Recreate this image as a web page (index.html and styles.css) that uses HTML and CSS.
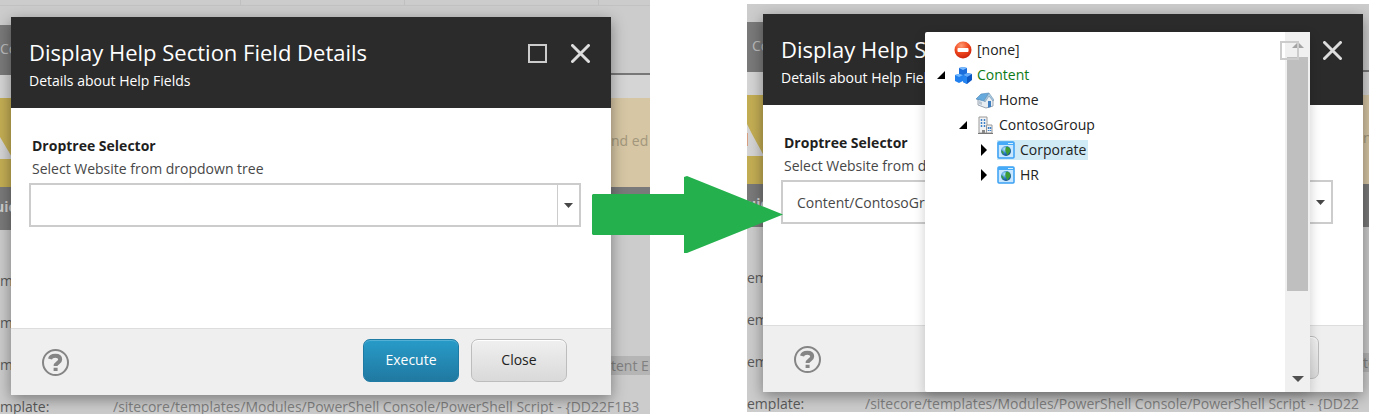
FILE: index.html
```html
<!DOCTYPE html>
<html lang="en">
<head>
<meta charset="utf-8">
<title>Droptree selector</title>
<link rel="stylesheet" href="styles.css">
</head>
<body>
<main class="page">
  <section class="scene">
    <div class="backdrop">
      <div class="grid-head"><i></i><i></i><i></i><i></i></div>
      <div class="band band-plain"></div>
      <div class="band band-tabs"><span class="tab">Co</span><span class="tab-line"></span></div>
      <div class="band band-gap"></div>
      <div class="band band-warning">
        <svg class="warning-mark" viewBox="0 0 40 89" aria-hidden="true"><path d="M-5 30 0 39 13 61H-5z" fill="#d5d5d5"/></svg>
        <span class="edge">nd ed</span>
      </div>
      <div class="band band-section"><b>uic</b></div>
      <div class="rows">
        <div class="row"><span class="row-label">m</span></div>
        <div class="row"><span class="row-label">m</span></div>
        <div class="row"><span class="row-label">m</span><span class="edge edge-marked">tent E</span></div>
        <div class="row"><span class="row-label">mplate:</span><span class="row-value">/sitecore/templates/Modules/PowerShell Console/PowerShell Script - {DD22F1B3</span></div>
      </div>
    </div>
    <div class="dialog">
      <header class="dialog-head">
        <div class="dialog-titles">
          <h1>Display Help Section Field Details</h1>
          <p>Details about Help Fields</p>
        </div>
        <button class="icon-button maximize" aria-label="Maximize"><svg viewBox="0 0 19 19"><path d="M1 1h17v17H1z"/></svg></button>
        <button class="icon-button" aria-label="Close dialog"><svg viewBox="0 0 19 19"><path class="cross" d="M1.5 1.5l16 16m0-16l-16 16"/></svg></button>
      </header>
      <div class="dialog-body">
        <label for="tree-a">Droptree Selector</label>
        <p>Select Website from dropdown tree</p>
        <div class="combo">
          <input id="tree-a" type="text">
          <button aria-label="Open tree"><svg viewBox="0 0 9 5"><path d="M0 0h9L4.500 5z"/></svg></button>
        </div>
      </div>
      <footer class="dialog-foot">
        <button class="icon-button help" aria-label="Help"><svg viewBox="0 0 27 27"><circle cx="13.500" cy="13.500" r="12.500"/><path d="M8 10C8.500 7.500 11 6.800 13.300 6.800c3 0 4.900 1.400 4.900 3.600 0 3.600-4.600 3.300-4.600 6.600M13.600 18.800v3.200"/></svg></button>
        <button class="button primary">Execute</button>
        <button class="button">Close</button>
      </footer>
    </div>
  </section>

  <div class="between">
    <svg class="arrow" viewBox="0 0 191 78" aria-hidden="true"><path d="M1 18h91V1l3-1 96 38.500L95 77h-3V59H1L0 58V19z"/></svg>
  </div>

  <section class="scene scene-open">
    <div class="backdrop">
      <div class="grid-head"></div>
      <div class="band band-plain"></div>
      <div class="band band-tabs"><span class="tab">Co</span><span class="tab-line"></span></div>
      <div class="band band-gap"></div>
      <div class="band band-warning">
        <svg class="warning-mark" viewBox="-5 0 40 89" aria-hidden="true"><path d="M-5 29 0 39 12 61H-5z" fill="#d5d5d5"/><path d="M-5 38v13h1V38z" fill="#d8a080"/></svg>
        <span class="edge">n</span>
      </div>
      <div class="band band-section"><b>uic</b></div>
      <div class="rows">
        <div class="row"><span class="row-label">em</span></div>
        <div class="row"><span class="row-label">em</span></div>
        <div class="row"><span class="row-label">em</span><span class="edge edge-marked">te</span></div>
        <div class="row"><span class="row-label">emplate:</span><span class="row-value">/sitecore/templates/Modules/PowerShell Console/PowerShell Script - {DD22</span></div>
      </div>
    </div>
    <div class="dialog">
      <header class="dialog-head">
        <div class="dialog-titles">
          <h1>Display Help Section Field Details</h1>
          <p>Details about Help Fields</p>
        </div>
        <button class="icon-button maximize" aria-label="Maximize"><svg viewBox="0 0 19 19"><path d="M1 1h17v17H1z"/></svg></button>
        <button class="icon-button" aria-label="Close dialog"><svg viewBox="0 0 19 19"><path class="cross" d="M1.5 1.5l16 16m0-16l-16 16"/></svg></button>
      </header>
      <div class="dialog-body">
        <label for="tree-b">Droptree Selector</label>
        <p>Select Website from dropdown tree</p>
        <div class="combo">
          <input id="tree-b" type="text" value="Content/ContosoGroup">
          <button aria-label="Open tree"><svg viewBox="0 0 9 5"><path d="M0 0h9L4.500 5z"/></svg></button>
        </div>
      </div>
      <footer class="dialog-foot">
        <button class="icon-button help" aria-label="Help"><svg viewBox="0 0 27 27"><circle cx="13.500" cy="13.500" r="12.500"/><path d="M8 10C8.500 7.500 11 6.800 13.300 6.800c3 0 4.900 1.400 4.900 3.600 0 3.600-4.600 3.300-4.600 6.600M13.600 18.800v3.200"/></svg></button>
        <button class="button" aria-label="Close"></button>
      </footer>
      <div class="popup">
        <ul class="tree" role="tree">
          <li role="treeitem" class="node">
            <span class="toggle"></span>
            <svg class="node-icon" viewBox="0 0 18 18"><defs><radialGradient id="red" cx=".4" cy=".25" r=".8"><stop offset="0" stop-color="#ff9a72"/><stop offset=".5" stop-color="#f04a20"/><stop offset="1" stop-color="#c81e08"/></radialGradient></defs><circle cx="9" cy="9" r="8.500" fill="url(#red)"/><rect x="3.500" y="7" width="11" height="4" rx="1" fill="#fff"/></svg>
            <span class="node-text">[none]</span>
          </li>
          <li role="treeitem" class="node">
            <span class="toggle"><svg viewBox="0 0 8 8"><path d="M8 0v8H0z"/></svg></span>
            <svg class="node-icon" viewBox="0 0 18 18"><path d="M5 2l4-1 4 1v6l-4 2-4-2z" fill="#1a6ddb"/><path d="M5 2l4-1 4 1-4 2z" fill="#7cbcff"/><path d="M1 9l4-1 4 1v6l-4 2-4-2z" fill="#2180ee"/><path d="M1 9l4-1 4 1-4 2z" fill="#72b8ff"/><path d="M9 9l4-2 5 1v6l-5 4-4-2z" fill="#0b58c4"/><path d="M9 9l4-2 5 1-5 3z" fill="#64aafa"/><path d="M9 9l4 2v7l-4-2z" fill="#2484f0"/></svg>
            <span class="node-text root">Content</span>
          </li>
          <li role="treeitem" class="node level-1">
            <span class="toggle"></span>
            <svg class="node-icon" viewBox="0 0 18 18"><path d="M2 8v6l8 3 7-2V9l-4-5z" fill="#e8edf2" stroke="#9aa6b2"/><path d="M0 8l5-5 8-1-5 8z" fill="#65a9dd" stroke="#4a83b5" stroke-width=".6"/><path d="M8 10l5-8 5 7-1 1-4-5-4 6z" fill="#a9cbe5" stroke="#7695ae" stroke-width=".6"/><path d="M12 10h3v6l-3 .7z" fill="#3f7fc0"/><path d="M3 10l3 1v3l-3-1z" fill="#b9c5d0"/></svg>
            <span class="node-text">Home</span>
          </li>
          <li role="treeitem" class="node level-1">
            <span class="toggle"><svg viewBox="0 0 8 8"><path d="M8 0v8H0z"/></svg></span>
            <svg class="node-icon" viewBox="0 0 18 18"><path d="M3 1h8v8h5v8H3z" fill="#f3f3f3" stroke="#999"/><path d="M10.500 9v8" stroke="#999"/><path d="M5.500 3v9M8.500 3v9M12.500 11v4M14.500 11v4" stroke="#3f82c8" stroke-width="1.500" stroke-dasharray="2 1" fill="none"/><path d="M6 14h3v3H6z" fill="#888"/><path d="M2 17.500h15" stroke="#777"/></svg>
            <span class="node-text">ContosoGroup</span>
          </li>
          <li role="treeitem" class="node level-2">
            <span class="toggle"><svg class="closed" viewBox="0 0 6 12"><path d="M0 0l6 6-6 6z"/></svg></span>
            <span class="selected">
              <svg class="node-icon" viewBox="0 0 18 18"><defs><radialGradient id="globe" cx=".35" cy=".3" r=".8"><stop offset="0" stop-color="#b8e8ff"/><stop offset=".5" stop-color="#2a80c8"/><stop offset="1" stop-color="#104070"/></radialGradient></defs><rect x="1" y="1" width="16" height="16" rx="1" fill="#c9e7ff" stroke="#3aa0f4" stroke-width="1.500"/><path d="M1 1h16v3H1z" fill="#45aaf8"/><path d="M11 2.500h5" stroke="#d6efff"/><circle cx="9" cy="10" r="5" fill="url(#globe)"/><path d="M9 6c3-1 5 2 4 5-2 1-1 3-3 3 0-3-3-3-1-8zM4.500 9l2 2v2.500c-1.500-1-2.500-3-2-4.500z" fill="#3e9c35"/></svg>
              <span class="node-text">Corporate</span>
            </span>
          </li>
          <li role="treeitem" class="node level-2">
            <span class="toggle"><svg class="closed" viewBox="0 0 6 12"><path d="M0 0l6 6-6 6z"/></svg></span>
            <svg class="node-icon" viewBox="0 0 18 18"><rect x="1" y="1" width="16" height="16" rx="1" fill="#c9e7ff" stroke="#3aa0f4" stroke-width="1.500"/><path d="M1 1h16v3H1z" fill="#45aaf8"/><path d="M11 2.500h5" stroke="#d6efff"/><circle cx="9" cy="10" r="5" fill="url(#globe)"/><path d="M9 6c3-1 5 2 4 5-2 1-1 3-3 3 0-3-3-3-1-8zM4.500 9l2 2v2.500c-1.500-1-2.500-3-2-4.500z" fill="#3e9c35"/></svg>
            <span class="node-text">HR</span>
          </li>
        </ul>
        <div class="scrollbar">
          <svg class="scroll-up" viewBox="0 0 12 6"><path d="M6 0l6 6H0z"/></svg>
          <div class="scroll-track"><div class="scroll-thumb"></div></div>
          <svg class="scroll-down" viewBox="0 0 12 6"><path d="M0 0h12L6 6z"/></svg>
        </div>
      </div>
    </div>
  </section>
</main>
</body>
</html>
```
FILE: styles.css
```css
* { box-sizing: border-box; }

body {
  margin: 0;
  background: #fff;
  font: 14px/20px "Open Sans", sans-serif;
  color: #474747;
  overflow: hidden;
}

h1, p, ul { margin: 0; padding: 0; }

button, input { font: inherit; color: inherit; }

svg { display: block; }

.page {
  display: grid;
  grid-template-columns: 650fr 97px 622fr;
  padding-right: 10px;
}

/* Dimmed application page with a dialog over it */
.scene {
  display: grid;
  grid-template-columns: minmax(0, 1fr);
  align-items: start;
  overflow: hidden;
  background: #ccc;
}

.scene > * { grid-area: 1 / 1; }

.scene-open { margin: 4px 0 2px; }

.scene-open .backdrop { margin-top: -7px; }

.backdrop {
  overflow: hidden;
  white-space: nowrap;
  color: #808080;
}

.grid-head {
  display: grid;
  grid-template-columns: 241fr 164fr 194fr 51fr;
  height: 6px;
  border-bottom: 1px solid #c2c2c2;
}

.grid-head i { border-right: 1px solid #c0c0c0; }
.grid-head i:last-child { border: 0; }

.band { display: flex; }
.band-plain { height: 19px; }
.band-tabs { height: 50px; }

.tab {
  width: 60px;
  background: #7a7a7a;
  color: #bdbdbd;
  line-height: 48px;
}

.tab-line { flex: 1; border-bottom: 2px solid #777; }

.band-gap { height: 23px; background: #d5d5d5; }

.band-warning {
  height: 89px;
  align-items: center;
  background: linear-gradient(to right, #c4ae54 40px, #d6c6a4 40px);
  color: #a2967c;
}

.warning-mark { width: 40px; height: 89px; }

.edge {
  width: 39px;
  margin-left: auto;
  overflow: hidden;
}

.band-warning .edge { padding-bottom: 4px; }

.scene-open .edge { width: 6px; }

.edge-marked { height: 19px; line-height: 19px; background: #b5b5b5; }

.band-section {
  height: 43px;
  background: #7a7a7a;
  color: #d0d0d0;
  line-height: 40px;
}

.band-section b { margin-left: -5px; }

.scene-open .tab { padding-left: 5px; }
.scene-open .band-section b { margin-left: 0; }

.rows { padding-top: 30px; }

.row {
  display: flex;
  align-items: center;
  height: 42px;
}

.row:last-child { height: 28px; line-height: 42px; align-items: flex-start; }

.row-label { width: 113px; color: #5a5a5a; }
.scene-open .row-label { width: 118px; }
.row-value { flex: 1; overflow: hidden; }

/* Dialog */
.dialog {
  position: relative;
  margin: 17px 39px 0 11px;
  background: #fff;
  box-shadow: 0 4px 14px rgba(0, 0, 0, .4);
}

.scene-open .dialog { margin: 10px 6px 0 16px; }

.dialog-head {
  display: flex;
  align-items: flex-start;
  gap: 24px;
  padding: 20px 21px 17px 18px;
  background: #2b2b2b;
  color: #fff;
}

.dialog-titles { flex: 1; min-width: 0; white-space: nowrap; }

.dialog-titles h1 {
  margin-bottom: 4px;
  font-size: 22px;
  font-weight: 400;
  line-height: 30px;
}

.icon-button {
  padding: 0;
  border: 0;
  background: none;
}

.dialog-head .icon-button { margin-top: 7px; z-index: 2; }

.dialog-head svg {
  width: 19px;
  height: 19px;
  fill: none;
  stroke: #ccc;
  stroke-width: 2;
}

.dialog-head .cross { stroke: #ddd; stroke-width: 3; stroke-linecap: round; }

.dialog-body { padding: 28px 30px 101px 18px; }

.dialog-body label {
  display: block;
  margin-left: 3px;
  font-weight: 700;
  color: #1f1f1f;
}

.dialog-body p { margin: 3px 0 4px 3px; }

.combo {
  display: flex;
  height: 44px;
  border: 2px solid #ccc;
}

.combo input {
  flex: 1;
  min-width: 0;
  padding: 2px 14px 0;
  border: 0;
  background: none;
  outline: 0;
}

.combo button {
  display: flex;
  align-items: center;
  justify-content: center;
  width: 22px;
  padding: 0;
  border: 0;
  border-left: 1px solid #ccc;
  background: #fff;
}

.combo svg { width: 9px; height: 5px; fill: #474747; }

.dialog-foot {
  display: flex;
  align-items: center;
  gap: 12px;
  padding: 10px 44px 13px 31px;
  border-top: 1px solid #ddd;
  background: #efefef;
}

.help { margin-right: auto; padding-top: 4px; }

.help svg {
  width: 27px;
  height: 27px;
  fill: none;
  stroke: #858585;
  stroke-width: 4;
}

.help circle { stroke-width: 2; }

.button {
  width: 96px;
  height: 43px;
  padding: 0 0 2px;
  border: 1px solid #bdbdbd;
  border-radius: 7px;
  background: linear-gradient(#f0f0f0, #d9d9d9);
  box-shadow: inset 0 1px #fff;
  color: #222;
}

.primary {
  border-color: #1f7ba3;
  background: linear-gradient(#289bc8, #2079a1);
  box-shadow: inset 0 1px #53b1d6;
  color: #fff;
}

/* Arrow spanning the two scenes */
.between { position: relative; z-index: 3; }

.arrow {
  position: absolute;
  top: 176px;
  left: -58px;
  width: 191px;
  height: 78px;
  fill: #24b14d;
}

/* Tree drop-down */
.popup {
  position: absolute;
  top: 18px;
  right: 53px;
  bottom: 0;
  left: 162px;
  z-index: 1;
  display: flex;
  border-radius: 2px;
  background: #fff;
  box-shadow: 0 4px 12px rgba(0, 0, 0, .2);
}

.tree {
  flex: 1;
  padding: 5px 0 0 10px;
  list-style: none;
  color: #222;
}

.node {
  display: flex;
  align-items: center;
  height: 25px;
}

.level-1 { padding-left: 22px; }
.level-2 { padding-left: 43px; }

.toggle {
  display: flex;
  justify-content: center;
  width: 12px;
  margin-right: 7px;
}

.toggle svg { width: 8px; height: 8px; fill: #000; }
.toggle .closed { width: 6px; height: 12px; }

.node-icon { width: 18px; height: 18px; margin-right: 5px; }

.root { color: #0c7a16; }

.selected {
  display: flex;
  align-items: center;
  padding-right: 2px;
  background: #d0ebf6;
}

.scrollbar {
  display: flex;
  flex-direction: column;
  align-items: center;
  width: 25px;
  padding: 10px 2px;
  background: #f0f0f0;
}

.scrollbar svg { width: 12px; height: 6px; fill: #505050; }
.scrollbar .scroll-up { fill: #a3a3a3; }

.scroll-track { flex: 1; align-self: stretch; padding: 9px 0 19px; }

.scroll-thumb { height: 78%; background: #bfbfbf; }
```
